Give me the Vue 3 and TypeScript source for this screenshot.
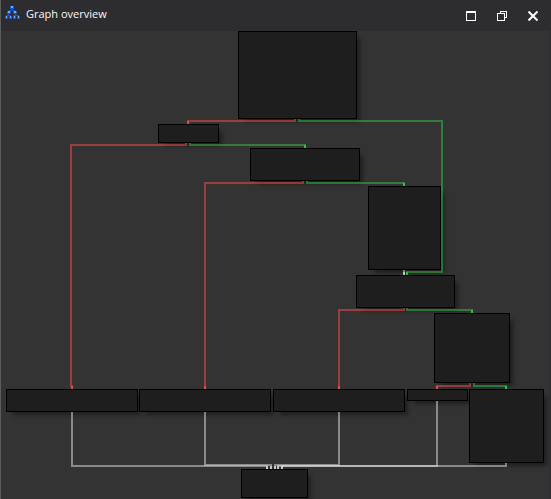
<script setup lang="ts">
interface GraphNode { id: string; x: number; y: number; w: number; h: number }
interface GraphEdge { kind: 'yes' | 'no' | 'flow'; points: string; tip: string }

const nodes: GraphNode[] = [
  { id: 'entry', x: 238, y: 0, w: 119, h: 88 },
  { id: 'b1', x: 158, y: 93, w: 61, h: 19 },
  { id: 'b2', x: 250, y: 117, w: 110, h: 33 },
  { id: 'b3', x: 368, y: 155, w: 73, h: 84 },
  { id: 'b4', x: 356, y: 244, w: 99, h: 33 },
  { id: 'b5', x: 434, y: 282, w: 76, h: 70 },
  { id: 'b6', x: 6, y: 358, w: 132, h: 23 },
  { id: 'b7', x: 139, y: 358, w: 132, h: 23 },
  { id: 'b8', x: 273, y: 358, w: 132, h: 23 },
  { id: 'b9', x: 407, y: 358, w: 61, h: 12 },
  { id: 'b10', x: 469, y: 358, w: 75, h: 74 },
  { id: 'exit', x: 241, y: 438, w: 67, h: 29 },
]

const edges: GraphEdge[] = [
  { kind: 'no', points: '295,88 295,90 188,90 188,93', tip: '188,90 188,93' },
  { kind: 'yes', points: '299,88 299,90 442,90 442,241 407,241 407,244', tip: '407,241 407,244' },
  { kind: 'no', points: '186,112 186,114 71,114 71,355 72,355 72,358', tip: '72,355 72,358' },
  { kind: 'yes', points: '190,112 190,114 305,114 305,117', tip: '305,114 305,117' },
  { kind: 'no', points: '303,150 303,152 205,152 205,358', tip: '205,355 205,358' },
  { kind: 'yes', points: '307,150 307,152 404,152 404,155', tip: '404,152 404,155' },
  { kind: 'flow', points: '404,239 404,244', tip: '404,241 404,244' },
  { kind: 'no', points: '404,277 404,279 339,279 339,358', tip: '339,355 339,358' },
  { kind: 'yes', points: '407,277 407,279 472,279 472,282', tip: '472,279 472,282' },
  { kind: 'no', points: '470,352 470,355 437,355 437,358', tip: '437,355 437,358' },
  { kind: 'yes', points: '474,352 474,355 506,355 506,358', tip: '506,355 506,358' },
  { kind: 'flow', points: '72,381 72,435 267,435 267,438', tip: '267,435 267,438' },
  { kind: 'flow', points: '205,381 205,434 271,434 271,438', tip: '271,435 271,438' },
  { kind: 'flow', points: '339,381 339,434 275,434 275,438', tip: '275,435 275,438' },
  { kind: 'flow', points: '437,370 437,435 278,435 278,438', tip: '278,435 278,438' },
  { kind: 'flow', points: '506,432 506,435 282,435 282,438', tip: '282,435 282,438' },
]

const logoBoxes = [[9, 6], [6, 11], [12, 11], [4, 16], [8, 16], [12, 16], [16, 16]]
</script>

<template>
  <section class="window">
    <header class="titlebar">
      <svg class="logo" width="21" height="25" shape-rendering="crispEdges" aria-hidden="true">
        <path d="M11 9V10M8 10.5H14M8.5 10V11M13.5 10V11M7 14V15M5 15.5H10M14 14V15M12 15.5H18" />
        <g v-for="([x, y], i) in logoBoxes" :key="i">
          <rect class="tile" :x="x" :y="y" :width="i < 3 ? 4 : 3" height="3" />
          <rect class="shine" :x="x + 1" :y="y" :width="i < 3 ? 2 : 1" height="2" />
        </g>
      </svg>
      <h1 class="title">Graph overview</h1>
      <button class="control" type="button" aria-label="Maximize">
        <svg width="10" height="10" shape-rendering="crispEdges"><path d="M0 .5H10M0 1.5H10M.5 1V10M9.5 1V10M0 9.5H10" /></svg>
      </button>
      <button class="control" type="button" aria-label="Float">
        <svg width="10" height="10" shape-rendering="crispEdges"><path d="M.5 3V10M0 2.5H8M7.5 3V10M0 9.5H8M3.5 0V3M3 .5H10M9.5 0V7M8 6.5H10" /></svg>
      </button>
      <button class="control" type="button" aria-label="Close">
        <svg width="10" height="10"><path class="cross" d="M.5.5 9.5 9.5M9.5.5.5 9.5" /></svg>
      </button>
    </header>
    <main class="canvas">
      <svg class="graph" height="468" role="img" aria-label="Graph overview">
        <rect
          v-for="n in nodes" :key="n.id" class="shade"
          :x="n.x + 7" :y="n.y + 7" :width="n.w - 4" :height="n.h - 4"
        />
        <g v-for="(e, i) in edges" :key="i" :class="['edge', e.kind]">
          <polyline :points="e.points" />
          <polyline class="tip" :points="e.tip" />
        </g>
        <rect
          v-for="n in nodes" :key="n.id" class="box"
          :x="n.x + 0.5" :y="n.y + 0.5" :width="n.w - 1" :height="n.h - 1"
        />
      </svg>
    </main>
  </section>
</template>

<style>
body { margin: 0; background: #333333; }
</style>

<style scoped>
.window {
  box-sizing: border-box;
  min-height: 100vh;
  border-left: 1px solid #5c5c5e;
  border-right: 2px solid #2d2d30;
  background: #333333;
  overflow: hidden;
}
.titlebar {
  display: flex;
  align-items: center;
  height: 31px;
  padding: 0 1px 0 0;
  background: #2d2d30;
}
.logo { flex: none; align-self: flex-start; margin: 0 4px 0 0; }
.logo path { fill: none; stroke: #1d52c8; stroke-width: 1; }
.tile { fill: #1657d8; }
.shine { fill: #62b0ff; }
.title {
  flex: 1;
  margin: 0 0 4px;
  color: #f8f8f8;
  font: 400 11px/16px "Open Sans", "Noto Sans", sans-serif;
}
.control {
  display: flex;
  align-items: center;
  justify-content: center;
  width: 31px;
  height: 31px;
  padding: 0;
  border: 0;
  background: none;
}
.control path { fill: none; stroke: #ffffff; stroke-width: 1; }
.control .cross { stroke-width: 2; }
.canvas { margin-left: -1px; }
.graph { display: block; width: 100%; overflow: visible; }
.edge polyline { fill: none; stroke-width: 2; }
.no { stroke: rgb(255 76 76 / 0.5); }
.yes { stroke: rgb(50 200 68 / 0.5); }
.flow { stroke: rgb(226 226 226 / 0.5); }
.no .tip { stroke: rgb(255 76 76 / 0.8); }
.yes .tip { stroke: rgb(50 210 68 / 0.8); }
.flow .tip { stroke: rgb(226 226 226 / 0.7); }
.box { fill: #1e1e1e; stroke: #000000; }
.shade { fill: rgb(0 0 0 / 0.4); filter: blur(2px); }
</style>
